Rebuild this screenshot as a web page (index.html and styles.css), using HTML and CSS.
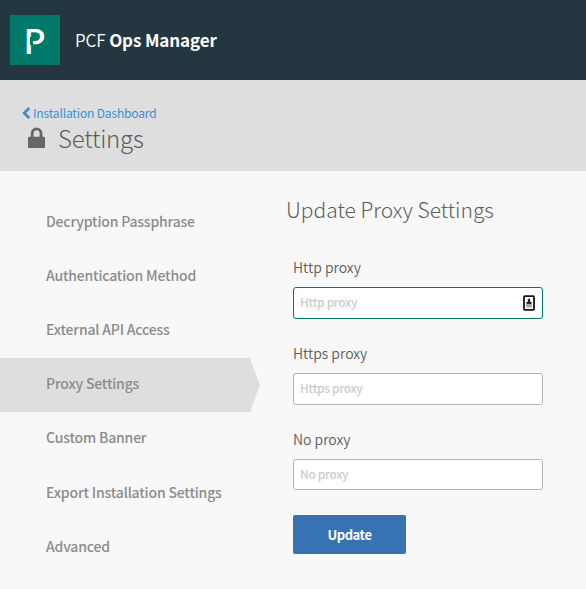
FILE: index.html
```html
<!DOCTYPE html>
<html lang="en">
<head>
<meta charset="utf-8">
<title>PCF Ops Manager</title>
<link rel="stylesheet" href="styles.css">
</head>
<body>
<header class="topbar">
  <div class="logo"><span class="logo-mark">P</span></div>
  <div class="brand"><span class="brand-light">PCF</span> <span class="brand-bold">Ops Manager</span></div>
</header>
<section class="heading">
  <a class="back"><svg class="chevron" viewBox="0 0 9 12"><path d="M7.2 1 2.2 6l5 5" fill="none" stroke="currentColor" stroke-width="2.8"/></svg><span class="back-label">Installation Dashboard</span></a>
  <div class="title-row">
    <svg class="lock" viewBox="0 0 18 22"><path d="M4.2 11V6.3a4.4 4.4 0 0 1 8.8 0V11" fill="none" stroke="currentColor" stroke-width="2.8"/><rect x="0" y="9.7" width="17" height="11.3" rx="1.2" fill="currentColor"/></svg>
    <h1 class="title">Settings</h1>
  </div>
</section>
<div class="content">
  <nav class="sidebar">
    <a class="nav-item">Decryption Passphrase</a>
    <a class="nav-item">Authentication Method</a>
    <a class="nav-item">External API Access</a>
    <a class="nav-item active">Proxy Settings</a>
    <a class="nav-item tall">Custom Banner</a>
    <a class="nav-item">Export Installation Settings</a>
    <a class="nav-item">Advanced</a>
  </nav>
  <main class="panel">
    <h2 class="panel-title">Update Proxy Settings</h2>
    <form class="form">
      <label class="label">Http proxy</label>
      <div class="field focused"><span class="placeholder">Http proxy</span>
        <svg class="vault" viewBox="0 0 12 16"><rect x="1" y="1.2" width="10" height="13.6" rx="0.8" fill="#fff" stroke="#151515" stroke-width="1.8"/><path d="M6 3 7.3 5v2h1.2v2h-5V7h1.2V5z" fill="#222"/><path d="M3 9h6v3.5H3z" fill="#aaa"/></svg>
      </div>
      <label class="label">Https proxy</label>
      <div class="field"><span class="placeholder">Https proxy</span></div>
      <label class="label">No proxy</label>
      <div class="field short"><span class="placeholder">No proxy</span></div>
      <button class="button" type="button">Update</button>
    </form>
  </main>
</div>
</body>
</html>
```
FILE: styles.css
```css
* { box-sizing: border-box; }
body {
  margin: 0;
  height: 589px;
  overflow: hidden;
  background: #f8f8f8;
  color: #666;
  font-family: "Noto Sans CJK SC", "Open Sans", sans-serif;
}
.topbar {
  display: flex;
  align-items: flex-start;
  height: 80px;
  padding: 15px 10px;
  background: #243640;
  color: #fff;
}
.logo {
  position: relative;
  width: 50px;
  height: 50px;
  padding-right: 1px;
  background: #00796b;
  text-align: center;
}
.logo-mark { font-size: 34px; line-height: 49px; font-weight: 500; }
/* notch between the stem and the end of the bowl */
.logo::after {
  content: "";
  position: absolute;
  left: 20px;
  top: 22px;
  width: 3px;
  height: 8px;
  background: #00796b;
}
.brand {
  margin-left: 15px;
  font-size: 17px;
  line-height: 49px;
  letter-spacing: -0.1px;
  white-space: nowrap;
}
.brand-light { font-weight: 350; }
.brand-bold { font-weight: 700; }
.heading {
  height: 91px;
  padding: 23px 22px 0;
  background: #dedede;
}
.back {
  display: flex;
  align-items: center;
  height: 20px;
  color: #3a90d0;
  font-size: 12px;
  line-height: 20px;
  letter-spacing: -0.15px;
}
.chevron { width: 9px; height: 12px; margin-right: 2px; }
.title-row { display: flex; height: 34px; padding-left: 6px; }
.lock { width: 18px; height: 22px; margin-top: 4px; }
.title {
  margin: 0 0 0 12px;
  color: #5c5c5c;
  font-size: 24px;
  line-height: 30px;
  font-weight: 300;
  letter-spacing: -0.2px;
}
.content { display: flex; height: 418px; }
.sidebar { width: 260px; padding-top: 25px; }
.nav-item {
  display: block;
  width: 251px;
  height: 54px;
  padding-left: 46px;
  color: #8c8c8c;
  font-size: 14px;
  font-weight: 500;
  line-height: 51px;
  letter-spacing: -0.18px;
  white-space: nowrap;
}
.nav-item.tall { height: 55px; }
.nav-item.active {
  width: 260px;
  background: #dedede;
  clip-path: polygon(0 0, 251px 0, 251px 3px, 260px 50%, 251px 51px, 251px 100%, 0 100%);
}
.panel { padding: 22px 0 0 26px; }
.panel-title {
  height: 34px;
  margin: 0;
  color: #5c5c5c;
  font-size: 21px;
  line-height: 33px;
  font-weight: 300;
}
.form { width: 257px; padding: 28px 0 0 7px; }
.label {
  display: block;
  height: 32px;
  color: #5c5c5c;
  font-size: 14px;
  font-weight: 350;
  line-height: 25px;
}
.field {
  display: flex;
  align-items: center;
  justify-content: space-between;
  height: 32px;
  margin-bottom: 22px;
  padding: 0 7px 0 6px;
  border: 1px solid #b3b3b3;
  border-radius: 3px;
  background: #fff;
}
.field.short { height: 31px; margin-bottom: 25px; }
.field.focused { border-color: #00796b; }
.placeholder {
  height: 30px;
  color: #ccc;
  font-size: 12px;
  font-weight: 500;
  line-height: 28px;
  letter-spacing: -0.35px;
}
.vault { width: 12px; height: 16px; }
.button {
  display: block;
  width: 113px;
  height: 39px;
  padding: 0;
  border: 0;
  border-radius: 2px;
  background: #3772b3;
  color: #fff;
  font-family: inherit;
  font-size: 13px;
  font-weight: 700;
  line-height: 38px;
  letter-spacing: -0.45px;
}
```
